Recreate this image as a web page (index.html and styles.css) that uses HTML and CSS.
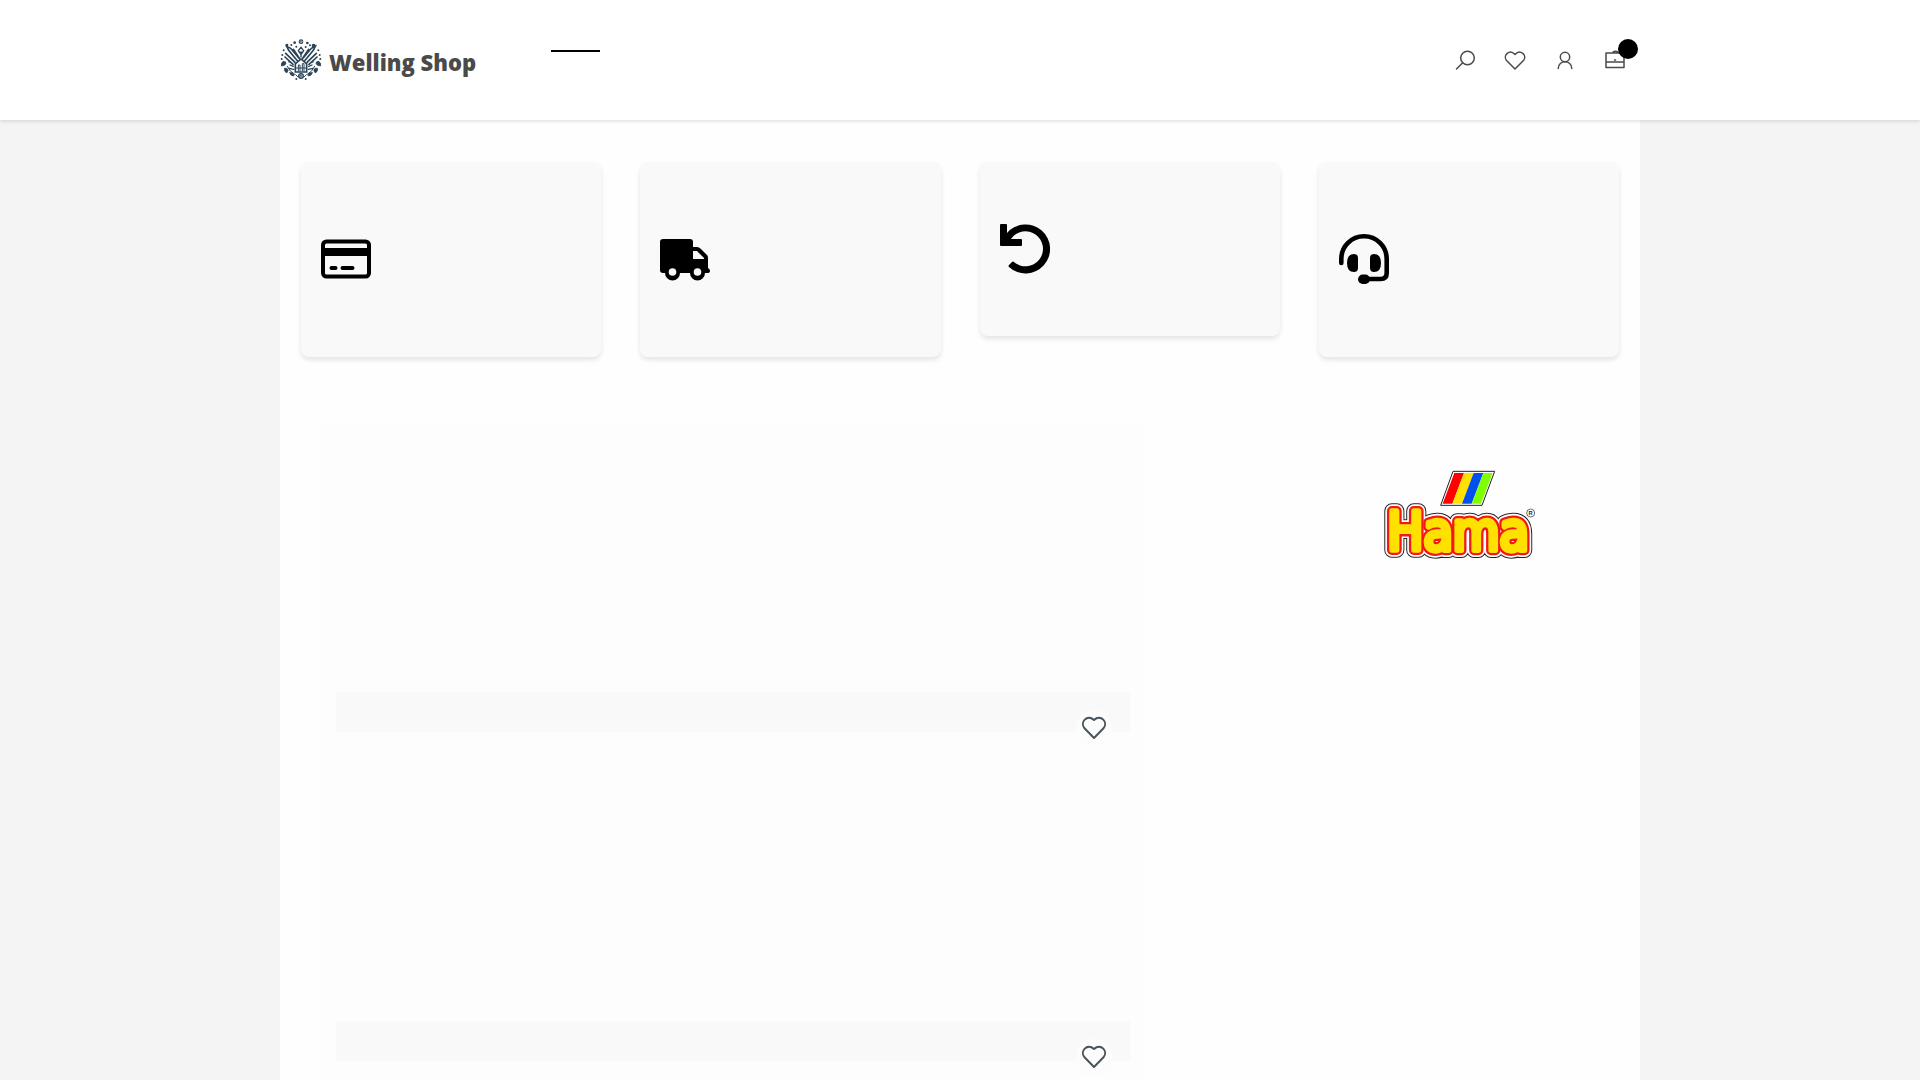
FILE: index.html
```html
<!DOCTYPE html>
<html lang="en">
<head>
    <meta charset="utf-8">
    <meta name="viewport" content="width=device-width, initial-scale=1">
    <title>Welling Shop</title>
    <link rel="stylesheet" href="styles.css">
</head>
<body>
    <header class="header">
        <div class="header-inner">
            <a class="logo" href="#">
                <svg class="logo-mark" viewBox="0 0 126 126" fill="none" stroke="#2c4459" stroke-width="3" stroke-linecap="round">
                    <!-- house -->
                    <path d="M46 99V75l17-15 17 15v24z" fill="#fff" stroke-width="5"/>
                    <path d="M55 96V78h5v18M67 96V74h5v22M46 87h34" stroke-width="3"/>
                    <!-- pencils and brushes -->
                    <path d="M52 65L26 34l-6-12 12 6 27 32M45 70L17 43M39 76L15 54M58 58L40 31M74 65l26-31 6-12-12 6-27 32M81 70l28-27M87 76l24-22M68 58l18-27" stroke-width="5"/>
                    <path d="M30 78l10 4M27 88l14 3M96 78l-10 4M99 88l-14 3" stroke-width="4"/>
                    <path d="M63 54V38M55 35l8-10 8 10-8 12z" stroke-width="4"/>
                    <!-- leaves -->
                    <path d="M10 67q-8 4-6 14 12 0 14-8 1-6-8-6M116 67q8 4 6 14-12 0-14-8-1-6 8-6M14 88q-4 8 6 14 8-8 2-13-3-3-8-1M112 88q4 8-6 14-8-8-2-13 3-3 8-1M29 101q2 10 13 10 0-12-13-10M97 101q-2 10-13 10 0-12 13-10" fill="#2c4459" stroke-width="2"/>
                    <path d="M22 82q7 16 22 24M104 82q-7 16-22 24M47 107l7 7M79 107l-7 7" stroke-width="3"/>
                    <g fill="#2c4459" stroke="none">
                        <circle cx="63" cy="8" r="7"/><circle cx="63" cy="111" r="9"/>
                        <circle cx="101" cy="20" r="6"/><circle cx="21" cy="18" r="4"/>
                        <circle cx="44" cy="11" r="4"/><circle cx="82" cy="12" r="4"/>
                        <circle cx="34" cy="18" r="3"/><circle cx="49" cy="23" r="3"/>
                        <circle cx="77" cy="24" r="3"/><circle cx="90" cy="19" r="3"/>
                        <circle cx="11" cy="34" r="3"/><circle cx="115" cy="34" r="3"/>
                        <circle cx="7" cy="48" r="3"/><circle cx="119" cy="48" r="3"/>
                        <circle cx="5" cy="60" r="3"/><circle cx="121" cy="60" r="3"/>
                        <circle cx="28" cy="68" r="3"/><circle cx="98" cy="68" r="3"/>
                        <circle cx="49" cy="120" r="3"/><circle cx="77" cy="120" r="3"/>
                    </g>
                    <circle cx="63" cy="111" r="4" stroke="#bccbd5" stroke-width="2"/>
                    <circle cx="63" cy="8" r="3" stroke="#bccbd5" stroke-width="2"/>
                </svg>
                <span class="logo-text">Welling Shop</span>
            </a>
            <nav class="nav" aria-label="Main">
                <a class="nav-link active" href="#" aria-label="Home"></a>
            </nav>
            <div class="actions">
                <button class="icon-btn" aria-label="Search">
                    <svg viewBox="0 0 20 20"><circle cx="12.5" cy="8" r="6.8"/><path d="M7.7 12.8L1.5 19"/></svg>
                </button>
                <a class="icon-btn" href="#" aria-label="Wishlist">
                    <svg viewBox="0 0 20 20"><path d="M10 19L1.3 10.2C-2.200 5.500 4.500-1.500 10 4.500c5.500-6 12.200 1 8.700 5.700z"/></svg>
                </a>
                <a class="icon-btn" href="#" aria-label="Account">
                    <svg viewBox="0 0 20 20"><circle cx="10" cy="7" r="4.700"/><path d="M3.200 18.500c0-9 13.600-9 13.600 0"/></svg>
                </a>
                <a class="icon-btn" href="#" aria-label="Cart">
                    <svg viewBox="0 0 20 20"><path d="M1 3h18v14.500H1zM1 12h18M8 3c0-2.200 5-2.200 5 0M9.500 10h1"/></svg>
                    <span class="badge"></span>
                </a>
            </div>
        </div>
    </header>

    <main class="container">
        <section class="benefits">
            <div class="benefit">
                <svg class="benefit-icon" viewBox="0 0 50 50">
                    <rect x="2" y="7.500" width="46" height="35" rx="3.500" fill="none" stroke="#000" stroke-width="4"/>
                    <path d="M2 14h46v8H2z"/>
                    <path d="M10.500 34h4M21.500 34h10" stroke="#000" stroke-width="4" stroke-linecap="round"/>
                </svg>
            </div>
            <div class="benefit">
                <svg class="benefit-icon" viewBox="0 0 50 50">
                    <path fill-rule="evenodd" d="M3 5h27q3 0 3 3v5h4q2 0 4 2l6 6q1 1 1 3v10q2 1 2 3t-3 2h-2a7.500 7.500 0 0 1-15 0h-10a7.500 7.500 0 0 1-15 0H3q-3 0-3-3V8q0-3 3-3zm30 12v8h11v-1l-7-7z"/>
                    <circle cx="12.500" cy="38" r="3.800" fill="#f9f9f9"/>
                    <circle cx="37.500" cy="38" r="3.800" fill="#f9f9f9"/>
                </svg>
            </div>
            <div class="benefit benefit-short">
                <svg class="benefit-icon" viewBox="0 0 50 50">
                    <path d="M1 0h5q1 0 1 1v8A24.500 24.500 0 1 1 9 43q-1-1 0-2l3-3q1-1 2 0A17.500 17.500 0 1 0 11 15h10q1 0 1 1v5q0 1-1 1H1q-1 0-1-1V1q0-1 1-1z"/>
                </svg>
            </div>
            <div class="benefit">
                <svg class="benefit-icon" viewBox="0 0 50 50">
                    <path d="M2.300 29v-4a22.700 22.700 0 0 1 45.400 0v14q0 6-6 6H29" fill="none" stroke="#000" stroke-width="4.600" stroke-linecap="round"/>
                    <path d="M15 20q4 0 4 4v10q0 4-4 4-7 0-7-9t7-9zM35 20q-4 0-4 4v10q0 4 4 4 7 0 7-9t-7-9z"/>
                    <rect x="19" y="40.500" width="12" height="9.500" rx="4.700"/>
                </svg>
            </div>
        </section>

        <div class="content">
            <section class="products">
                <article class="product">
                    <div class="product-image">
                        <button class="wish-btn" aria-label="Add to wishlist">
                            <svg viewBox="0 0 24 24"><path d="M12 22L2.500 12.300C-2.500 6.500 5-2.200 12 4c7-6.200 14.500 2.500 9.500 8.300z"/></svg>
                        </button>
                    </div>
                </article>
                <article class="product">
                    <div class="product-image">
                        <button class="wish-btn" aria-label="Add to wishlist">
                            <svg viewBox="0 0 24 24"><path d="M12 22L2.500 12.300C-2.500 6.500 5-2.200 12 4c7-6.200 14.500 2.500 9.500 8.300z"/></svg>
                        </button>
                    </div>
                </article>
            </section>
            <aside class="brand">
                <svg class="brand-logo" viewBox="0 0 540 330">
                    <path d="M252 34h125l-38 102H215z" fill="#fff" stroke="#222" stroke-width="3"/>
                    <path d="M256 39h29l-35 92h-29z" fill="#f00"/>
                    <path d="M285 39h29l-35 92h-29z" fill="#ffe100"/>
                    <path d="M314 39h29l-35 92h-29z" fill="#0050f0"/>
                    <path d="M343 39h28l-35 92h-28z" fill="#80ff00"/>
                    <g class="hama">
                        <text class="hama-line" x="55" y="271">Hama</text>
                        <text class="hama-white" x="55" y="271">Hama</text>
                        <text class="hama-red" x="55" y="271">Hama</text>
                        <text class="hama-yellow" x="55" y="271">Hama</text>
                    </g>
                    <circle cx="485" cy="159" r="12" fill="#fff" stroke="#223" stroke-width="2"/>
                    <text class="registered" x="485" y="165">R</text>
                </svg>
            </aside>
        </div>
    </main>
</body>
</html>
```
FILE: styles.css
```css
* { box-sizing: border-box; }
body { margin: 0; background: #f4f4f4; font-family: "Open Sans", sans-serif; color: #4a4a4a; }

.header { position: relative; background: #fff; box-shadow: 0 1px 4px rgba(0, 0, 0, 0.15); }
.header-inner { display: flex; align-items: center; max-width: 1360px; height: 120px; margin: 0 auto; }
.logo { display: flex; align-items: center; gap: 7px; color: #4a4a4a; text-decoration: none; }
.logo-mark { width: 42px; height: 42px; }
.logo-text { font-size: 22px; line-height: 30px; font-weight: 800; padding-top: 4px; }
.nav { margin-left: 75px; padding-bottom: 18px; }
.nav-link { display: block; width: 49px; }
.nav-link.active { border-bottom: 2px solid #000; }
.actions { display: flex; gap: 30px; margin-left: auto; padding-right: 15px; }
.icon-btn { position: relative; display: block; width: 20px; height: 20px; padding: 0; border: 0; background: none; cursor: pointer; }
.icon-btn svg { display: block; width: 20px; height: 20px; overflow: visible; fill: none; stroke: #4a4a4f; stroke-width: 1.5; stroke-linecap: round; stroke-linejoin: round; }
.badge { position: absolute; top: -11px; right: -13px; width: 20px; height: 20px; border-radius: 50%; background: #000; }

.container { max-width: 1360px; min-height: calc(100vh - 120px); margin: 0 auto; padding: 42px 21px 0; background: #fefefe; }
.benefits { display: grid; grid-template-columns: repeat(4, 1fr); gap: 39px; align-items: start; }
.benefit { display: flex; align-items: center; min-height: 195px; padding: 20px 20px 22px; border-radius: 8px; background: #f9f9f9; box-shadow: 0 3px 5px rgba(0, 0, 0, 0.1); }
.benefit-short { min-height: 174px; padding-bottom: 20px; }
.benefit-icon { width: 50px; height: 50px; }

.content { display: grid; grid-template-columns: 826px 320px; justify-content: space-between; margin-top: 65px; padding-left: 19px; }
.products { display: grid; gap: 289px; align-content: start; padding: 270px 16px 17px; background: #fdfdfd; }
.product-image { position: relative; height: 40px; background: #f9f9f9; }
.wish-btn { position: absolute; right: 18px; bottom: -14px; display: flex; align-items: center; justify-content: center; width: 36px; height: 36px; padding: 0; border: 0; border-radius: 50%; background: #fcfcfc; cursor: pointer; }
.wish-btn svg { width: 24px; height: 24px; overflow: visible; fill: none; stroke: #4a545b; stroke-width: 2; stroke-linejoin: round; }

.brand { padding-top: 38px; text-align: center; }
.brand-logo { width: 180px; height: 110px; }
.hama { font-family: "DejaVu Sans Condensed", "DejaVu Sans", sans-serif; font-size: 160px; stroke-linejoin: round; }
.hama-line { fill: #222; stroke: #222; stroke-width: 46px; }
.hama-white { fill: #fff; stroke: #fff; stroke-width: 40px; }
.hama-red { fill: #f31818; stroke: #f31818; stroke-width: 30px; }
.hama-yellow { fill: #ffe100; stroke: #ffe100; stroke-width: 16px; }
.registered { font-family: "Liberation Sans", sans-serif; font-size: 17px; font-weight: bold; text-anchor: middle; fill: #223; }
```
